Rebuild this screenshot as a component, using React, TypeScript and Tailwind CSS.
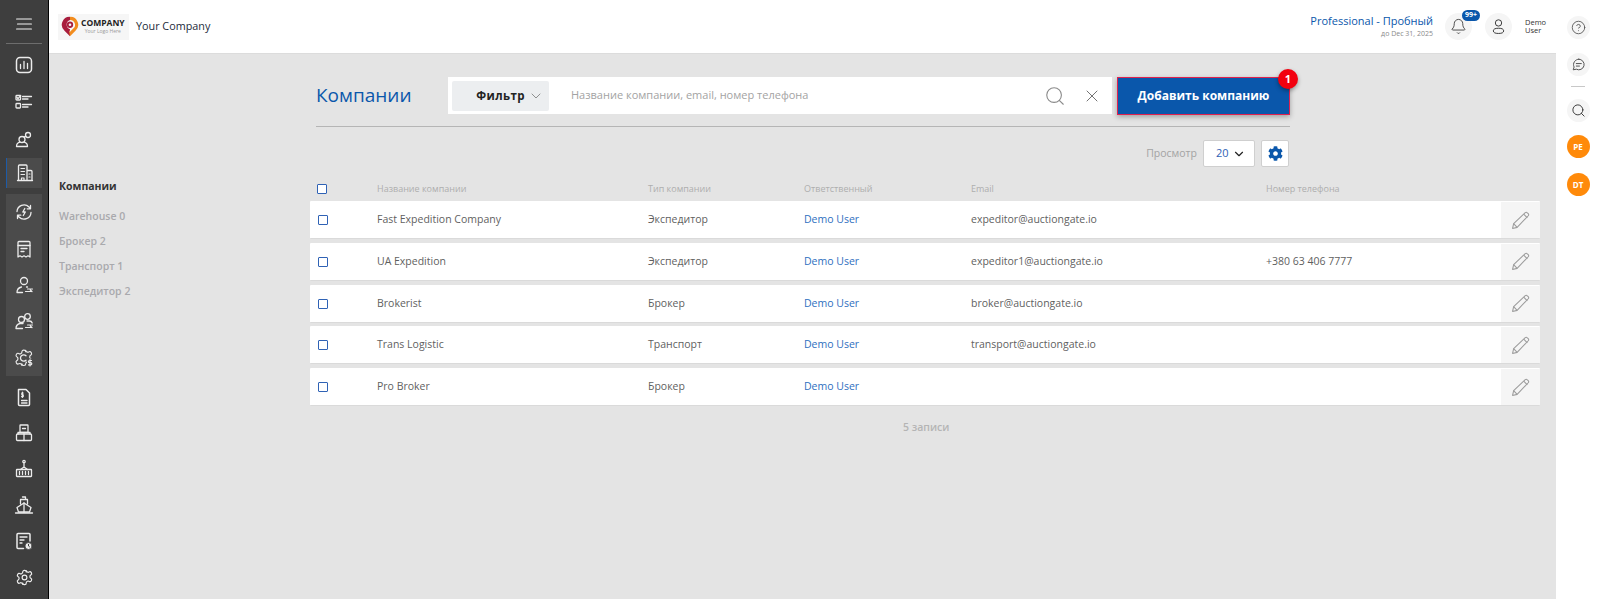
import type { ReactNode } from 'react'
import { Bell, ChevronDown, CircleHelp, Search, X } from 'lucide-react'
import { FaCog } from 'react-icons/fa'

const rows = [
  { name: 'Fast Expedition Company', type: 'Экспедитор', email: 'expeditor@auctiongate.io', phone: '' },
  { name: 'UA Expedition', type: 'Экспедитор', email: 'expeditor1@auctiongate.io', phone: '+380 63 406 7777' },
  { name: 'Brokerist', type: 'Брокер', email: 'broker@auctiongate.io', phone: '' },
  { name: 'Trans Logistic', type: 'Транспорт', email: 'transport@auctiongate.io', phone: '' },
  { name: 'Pro Broker', type: 'Брокер', email: '', phone: '' },
]

const subNav = ['Warehouse 0', 'Брокер 2', 'Транспорт 1', 'Экспедитор 2']

const gearPath =
  'M12.220 3h-.440a2 2 0 0 0-2 2v.180a2 2 0 0 1-1 1.730l-.430.250a2 2 0 0 1-2 0l-.150-.080a2 2 0 0 0-2.730.730l-.220.380a2 2 0 0 0 .730 2.730l.150.100a2 2 0 0 1 1 1.720v.510a2 2 0 0 1-1 1.740l-.150.090a2 2 0 0 0-.730 2.730l.220.380a2 2 0 0 0 2.730.730l.150-.080a2 2 0 0 1 2 0l.430.250a2 2 0 0 1 1 1.730V19a2 2 0 0 0 2 2h.440a2 2 0 0 0 2-2v-.180a2 2 0 0 1 1-1.730l.430-.250a2 2 0 0 1 2 0l.150.080a2 2 0 0 0 2.730-.730l.220-.390a2 2 0 0 0-.730-2.730l-.150-.080a2 2 0 0 1-1-1.740v-.500a2 2 0 0 1 1-1.740l.150-.090a2 2 0 0 0 .730-2.730l-.220-.380a2 2 0 0 0-2.730-.730l-.150.080a2 2 0 0 1-2 0l-.430-.250a2 2 0 0 1-1-1.730V5a2 2 0 0 0-2-2z'

function NavIcon({ children }: { children: ReactNode }) {
  return (
    <svg viewBox="0 0 24 24" fill="none" stroke="#ececec" strokeWidth="1.300" strokeLinecap="round" strokeLinejoin="round" className="h-6 w-6">
      {children}
    </svg>
  )
}

const topIcons = [
  <NavIcon key="chart">
    <rect x="4.500" y="4.500" width="15" height="15" rx="3.500" strokeWidth="1.500" />
    <path d="M8.500 15.500v-4M12 15.500v-7M15.500 15.500v-5" />
  </NavIcon>,
  <NavIcon key="list">
    <rect x="4" y="5.500" width="4.500" height="4.500" rx=".8" />
    <path d="m4.800 7.300 1.300 1.400 2.600-3.200M10.500 6.500h9M10.500 9h5.500" />
    <rect x="4" y="13.500" width="4.500" height="4.500" rx=".8" />
    <path d="M10.500 14.500h9M10.500 17h5.500" />
  </NavIcon>,
  <NavIcon key="users">
    <circle cx="10" cy="12.500" r="3" />
    <path d="M4.500 19.500c0-2.300 1.500-3.800 3.300-4.300M15.500 19.500c0-2.300-1.500-3.800-3.300-4.300M4.500 19.500h11" />
    <circle cx="16" cy="8" r="2.500" />
    <path d="M12.200 9.800l2-.5" />
  </NavIcon>,
]

const groupIcons = [
  <NavIcon key="refresh">
    <path d="M5 11.500A7 7 0 0 1 17 7l1.500 1.800M18.500 5.500v3.300h-3.300" />
    <path d="M19 12.500A7 7 0 0 1 7 17l-1.500-1.800M5.500 18.500v-3.300h3.300" />
    <path d="m12.800 8.500-2 3.500h2.500l-2 3.500" />
  </NavIcon>,
  <NavIcon key="receipt">
    <path d="M6 5.500a1 1 0 0 1 1-1h10a1 1 0 0 1 1 1V20l-2-1.200-2 1.200-2-1.200-2 1.200-2-1.200L6 20z" />
    <path d="M6 8.500h12M9 11.500h6M9 14.500h3" />
  </NavIcon>,
  <NavIcon key="user-swap">
    <circle cx="12" cy="8" r="3.500" />
    <path d="M5 19.500c0-3 2.300-5 4.500-5.500M5 19.500h5.500M14.500 14h1" />
    <path d="M13.500 18.500h6.500M18.300 17l1.700 1.500M20.500 16h-5" strokeWidth="1.200" />
  </NavIcon>,
  <NavIcon key="users-swap">
    <circle cx="9.500" cy="10.500" r="3" />
    <circle cx="15.500" cy="7.500" r="2.800" />
    <path d="M4 19.500c0-2.800 1.800-4.500 4-5h3M4 19.500h6.500M15 12h2.500c1.300 0 2.300.8 2.700 2" />
    <path d="M13.500 18.500h6.500M18.300 17l1.700 1.500M20.500 16h-5" strokeWidth="1.200" />
  </NavIcon>,
  <NavIcon key="gear-money">
    <g transform="translate(1.500 1.500) scale(.86)">
      <path d={gearPath} />
    </g>
    <path d="M14 9.800a3.200 3.200 0 1 0 0 4.400" />
    <rect x="15" y="12.500" width="7" height="9" fill="#4b4b4b" stroke="none" />
    <path d="M19.500 14.500h-2a.9.900 0 0 0 0 2.200h1.200a.9.900 0 0 1 0 2.200H16.500M18 13.500v6.500" strokeWidth="1.200" />
  </NavIcon>,
]

const bottomIcons = [
  <NavIcon key="doc">
    <path d="M6.500 4.500h7.500l3.500 3.500v11.500a1 1 0 0 1-1 1H7.500a1 1 0 0 1-1-1z" strokeWidth="1.500" />
    <path d="M9.500 15.500h5.500M9.500 18h5.500" />
    <path d="M11.300 8H9.800v1.800h1.500v1.800H9.500M10.400 7v5.500" strokeWidth="1.100" />
  </NavIcon>,
  <NavIcon key="boxes">
    <rect x="8" y="4" width="8" height="7.500" rx=".5" />
    <rect x="4.500" y="13" width="15" height="6.500" rx="1" />
    <path d="M6 11.500v1.500M18 11.500v1.500M6 11.500h12M12 13v6.500M10.500 7.500h3" />
  </NavIcon>,
  <NavIcon key="crane">
    <circle cx="12" cy="4.500" r="1.200" />
    <path d="M12 6v4M8.500 12.500 12 10l3.500 2.500" />
    <rect x="4.500" y="12.500" width="15" height="7" rx=".5" />
    <path d="M7.500 14.500v3M10.500 14.500v3M13.500 14.500v3M16.500 14.500v3" />
  </NavIcon>,
  <NavIcon key="ship">
    <path d="M10.500 4h3v2.500M8.500 11V6.500h7V11" />
    <path d="M5 14.500 12 10l7 4.500-1.500 4.500h-11z" />
    <path d="M12 10v9M3.500 20h17" />
  </NavIcon>,
  <NavIcon key="doc-clock">
    <path d="M11.500 19.500H6a1 1 0 0 1-1-1V5.500a1 1 0 0 1 1-1h11a1 1 0 0 1 1 1v6.500" strokeWidth="1.500" />
    <path d="M8 8h7M8 11h4M8 14h2" />
    <circle cx="16.500" cy="17" r="3.500" fill="#ececec" stroke="#3e3e3e" strokeWidth=".8" />
    <path d="M16.500 15.300V17l1 .8" stroke="#3e3e3e" strokeWidth="1" />
  </NavIcon>,
]

function Sidebar() {
  return (
    <aside className="flex w-[49px] shrink-0 flex-col border-r border-black bg-[#3e3e3e]">
      <div className="flex h-[43px] items-center justify-center pt-[5px]">
        <svg viewBox="0 0 16 12" fill="none" stroke="#f2f2f2" strokeWidth="1.200" strokeLinecap="round" className="h-[12px] w-[16px]">
          <path d="M.6 1h14.800M1.500 6h13.900M.6 11h14.800" />
        </svg>
      </div>
      <div className="mx-[6px] h-px bg-[#6d6d6d]" />
      <div className="mt-[2px] flex flex-col">
        {topIcons.map((icon, i) => (
          <div key={i} className="flex h-[37px] items-center justify-center">{icon}</div>
        ))}
      </div>
      <div className="mx-[6px] mt-[1px] flex h-[30px] items-center justify-center border-l border-[#1d5ba8] bg-[#4b4b4b]">
        <NavIcon>
          <path d="M5.500 19.500V5a1 1 0 0 1 1-1h6.500a1 1 0 0 1 1 1v14.500M14 9.500h4a1 1 0 0 1 1 1v9M4.500 19.500h15" />
          <path d="M8 7.500h3.500M8 10.500h3.500M8 13.500h3.500M16 13h1M16 16h1M8.500 19.500V17h2.500v2.500" strokeWidth="1.200" />
        </NavIcon>
      </div>
      <div className="mx-[6px] mt-[6px] flex h-[182px] flex-col bg-[#4b4b4b]">
        {groupIcons.map((icon, i) => (
          <div key={i} className="flex h-[36.400px] items-center justify-center">{icon}</div>
        ))}
      </div>
      <div className="mt-[3px] flex flex-col">
        {bottomIcons.map((icon, i) => (
          <div key={i} className="flex h-[36px] items-center justify-center">{icon}</div>
        ))}
        <div className="flex h-[36px] items-center justify-center">
          <svg viewBox="0 0 24 24" fill="none" stroke="#ececec" strokeWidth="1.500" strokeLinecap="round" strokeLinejoin="round" className="h-[19px] w-[19px]">
            <circle cx="12" cy="12" r="3" />
            <path d={gearPath} />
          </svg>
        </div>
      </div>
    </aside>
  )
}

function Header() {
  return (
    <header className="flex h-[54px] shrink-0 items-center border-b border-[#dcdcdc] bg-white pl-[9px] pr-[9px]">
      <div className="flex h-[26px] w-[71px] items-center gap-[2px] bg-[#f6f6f6] pl-[3px]">
        <svg viewBox="0 0 20 24" className="h-[21px] w-[18px] shrink-0">
          <path d="M10 23 4 17A9 9 0 0 1 10 1z" fill="#a81d3d" />
          <path d="M10 1a9 9 0 0 1 6 16l-6 6-1-5a8 8 0 0 0 1-1z" fill="#f28c1e" />
          <path d="M10 4.500a5.500 5.500 0 0 1 4 9.500l-4.500 4.500.5-3.500a5.500 5.500 0 0 1 0-10.500z" fill="#f6f6f6" />
          <circle cx="10" cy="10" r="3.600" fill="#a81d3d" />
          <circle cx="10" cy="10" r="1.500" fill="#f6f6f6" />
        </svg>
        <div className="flex flex-col items-center">
          <span className="text-[8.500px] font-bold leading-[10px] text-[#222]">COMPANY</span>
          <span className="text-[5px] leading-[7px] text-[#9a9a9a]">Your Logo Here</span>
        </div>
      </div>
      <span className="ml-[7px] text-[10.800px] text-[#1c2a3a]">Your Company</span>
      <div className="ml-auto flex flex-col items-end">
        <span className="-mt-[2px] text-[11px] font-medium leading-[16px] text-[#0a57ab]">Professional - Пробный</span>
        <span className="text-[7px] leading-[10px] text-[#8a8a8a]">до Dec 31, 2025</span>
      </div>
      <div className="relative ml-[12px] flex h-[27px] w-[27px] items-center justify-center rounded-full bg-[#f5f5f5]">
        <Bell className="h-[17px] w-[17px] text-[#333]" strokeWidth={1.200} />
        <span className="absolute left-[17px] top-[-3px] flex h-[11px] w-[18px] items-center justify-center rounded-full bg-[#0a57ab] text-[7px] font-bold text-white">99+</span>
      </div>
      <div className="ml-[13px] flex h-[27px] w-[27px] items-center justify-center rounded-full bg-[#f5f5f5]">
        <svg viewBox="0 0 24 24" fill="none" stroke="#333" strokeWidth="1.200" className="h-[19px] w-[19px]">
          <circle cx="12" cy="7.500" r="4" />
          <ellipse cx="12" cy="17.500" rx="6.500" ry="3.300" />
        </svg>
      </div>
      <div className="ml-[13px] flex w-[22px] flex-col text-[7.500px] leading-[7.500px] text-[#333]">
        <span>Demo</span>
        <span>User</span>
      </div>
    </header>
  )
}

function RightRail() {
  return (
    <aside className="flex w-[44px] shrink-0 flex-col items-center bg-white pt-[16px]">
      <div className="flex h-[23px] w-[23px] items-center justify-center rounded-full bg-[#f5f5f5]">
        <CircleHelp className="h-[15px] w-[15px] text-[#555]" strokeWidth={1.400} />
      </div>
      <div className="mt-[14px] flex h-[23px] w-[23px] items-center justify-center rounded-full bg-[#f5f5f5]">
        <svg viewBox="0 0 24 24" fill="none" stroke="#555" strokeWidth="1.600" strokeLinecap="round" strokeLinejoin="round" className="h-[15px] w-[15px]">
          <path d="M12.500 3.500a8.500 8.500 0 1 1-4 16l-5 1 1.500-4.500a8.500 8.500 0 0 1 7.500-12.500z" />
          <path d="M8.500 10.500h8M8.500 14.500h5" />
        </svg>
      </div>
      <div className="mt-[10px] h-px w-[14px] bg-[#c8c8c8]" />
      <div className="mt-[12px] flex h-[23px] w-[23px] items-center justify-center rounded-full bg-[#f5f5f5]">
        <Search className="h-[15px] w-[15px] text-[#333]" strokeWidth={1.500} />
      </div>
      <div className="mt-[13px] flex h-[23px] w-[23px] items-center justify-center rounded-full bg-[#ff8a0a] text-[8px] font-bold text-white">PE</div>
      <div className="mt-[15px] flex h-[23px] w-[23px] items-center justify-center rounded-full bg-[#ff8a0a] text-[8px] font-bold text-white">DT</div>
    </aside>
  )
}

function Check() {
  return <span className="block h-[10px] w-[10px] rounded-[1px] border border-[#2f62b5] bg-white" />
}

function Pencil() {
  return (
    <svg viewBox="0 0 18 18" fill="none" stroke="#9c9c9c" strokeWidth="1" strokeLinejoin="round" className="h-[19px] w-[19px]">
      <path d="M1.500 16.500 2.500 12 13.500 1.500a1.500 1.500 0 0 1 2 .2l.8.8a1.500 1.500 0 0 1 0 2L5.800 15.500z" />
      <path d="m2.500 12 3.300 3.500M12 3l3.500 3.500" />
    </svg>
  )
}

function CompanyRow({ name, type, email, phone }: (typeof rows)[number]) {
  return (
    <div className="grid h-[38px] grid-cols-[67px_271px_156px_167px_295px_1fr_39px] items-center rounded-[1px] border-b border-[#dadada] bg-white pt-[1px] text-[10.500px] text-[#5f5f5f]">
      <div className="pl-[8px]"><Check /></div>
      <div>{name}</div>
      <div>{type}</div>
      <div className="text-[#2f6fc0]">Demo User</div>
      <div>{email}</div>
      <div>{phone}</div>
      <div className="flex h-full items-center justify-center bg-[#f5f5f5]"><Pencil /></div>
    </div>
  )
}

export default function App() {
  return (
    <div className="flex h-screen w-full overflow-hidden bg-[#e4e4e4] font-['Open_Sans',sans-serif]">
      <Sidebar />
      <div className="flex min-w-0 flex-1 flex-col">
        <Header />
        <div className="flex flex-1">
          <nav className="w-[261px] shrink-0 pl-[10px] pt-[124px] text-[10.500px] font-semibold text-[#a9a9ad]">
            <div className="mb-[14px] font-bold leading-[16px] text-[#333]">Компании</div>
            <div className="flex flex-col gap-[9px]">
              {subNav.map((item) => (
                <div key={item} className="leading-[16px]">{item}</div>
              ))}
            </div>
          </nav>
          <main className="min-w-0 flex-1 pr-[16px] pt-[23px]">
            <div className="ml-[6px] w-[974px]">
              <div className="flex h-[50px] items-start border-b border-[#b5b5b5]">
                <h1 className="w-[132px] pt-[3px] text-[19px] leading-[30px] text-[#0a57ab]">Компании</h1>
                <div className="flex h-[37px] w-[664px] items-center bg-white pl-[4px] pr-[10px]">
                  <button className="flex h-[30px] w-[97px] items-center justify-end gap-[3px] rounded-[2px] bg-[#eceef0] pr-[5px] text-[11.500px] font-bold tracking-[0.4px] text-[#222]">
                    Фильтр
                    <ChevronDown className="h-[16px] w-[16px] text-[#777]" strokeWidth={1.200} />
                  </button>
                  <span className="ml-[22px] text-[11px] text-[#a3a3a3]">Название компании, email, номер телефона</span>
                  <Search className="ml-auto h-[22px] w-[22px] text-[#8a8a8a]" strokeWidth={1.200} />
                  <X className="ml-[16px] h-[20px] w-[20px] text-[#666]" strokeWidth={1.100} />
                </div>
                <div className="relative ml-[5px] flex h-[38px] w-[173px] items-center justify-center border border-[#e0214f] bg-[#0a57ab] text-[12px] font-bold text-white shadow-[0_2px_5px_rgba(0,0,0,0.3)]">
                  Добавить компанию
                  <span className="absolute right-[-9px] top-[-9px] flex h-[20px] w-[20px] items-center justify-center rounded-full bg-[#f2000f] text-[11px] font-bold text-white shadow-[0_2px_4px_rgba(0,0,0,0.35)]">1</span>
                </div>
              </div>
              <div className="mr-[1px] mt-[13px] flex items-center justify-end">
                <span className="text-[10.500px] text-[#a3a3a3]">Просмотр</span>
                <div className="ml-[6px] flex h-[27px] w-[52px] items-center justify-between rounded-[2px] border border-[#cfcfcf] bg-white pl-[12px] pr-[8px] text-[11px] text-[#2f62b5]">
                  20
                  <ChevronDown className="h-[14px] w-[14px] text-[#222]" strokeWidth={2} />
                </div>
                <div className="ml-[6px] flex h-[27px] w-[28px] items-center justify-center rounded-[2px] border border-[#cfcfcf] bg-white">
                  <FaCog className="h-[15px] w-[15px] text-[#0a57ab]" />
                </div>
              </div>
            </div>
            <div className="mt-[9px] grid h-[25px] grid-cols-[67px_271px_156px_167px_295px_1fr_39px] items-center text-[9px] text-[#aeaeae]">
              <div className="pl-[7px]"><Check /></div>
              <div>Название компании</div>
              <div>Тип компании</div>
              <div>Ответственный</div>
              <div>Email</div>
              <div>Номер телефона</div>
            </div>
            <div className="flex flex-col gap-[3.750px]">
              {rows.map((row) => (
                <CompanyRow key={row.name} {...row} />
              ))}
            </div>
            <div className="ml-[593px] mt-[14px] text-[10.500px] font-semibold text-[#b4b4b4]">5 записи</div>
          </main>
        </div>
      </div>
      <RightRail />
    </div>
  )
}
